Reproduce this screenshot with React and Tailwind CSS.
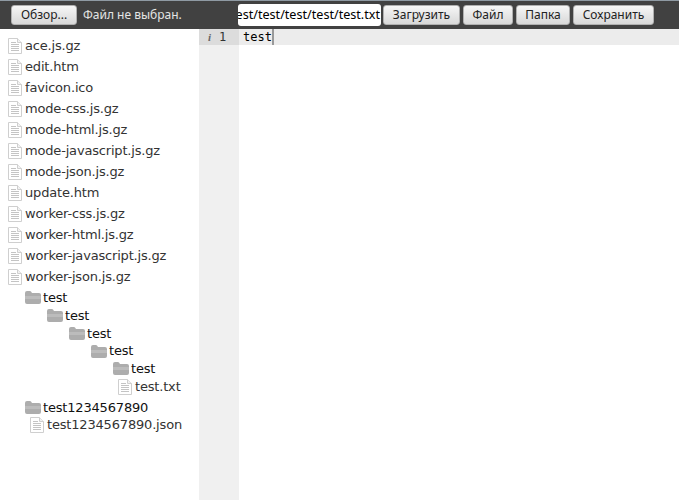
const FILES = [
  'ace.js.gz',
  'edit.htm',
  'favicon.ico',
  'mode-css.js.gz',
  'mode-html.js.gz',
  'mode-javascript.js.gz',
  'mode-json.js.gz',
  'update.htm',
  'worker-css.js.gz',
  'worker-html.js.gz',
  'worker-javascript.js.gz',
  'worker-json.js.gz',
];

const TOOLS = [
  { label: 'Загрузить', width: 'w-[77px]' },
  { label: 'Файл', width: 'w-[50px]' },
  { label: 'Папка', width: 'w-[54px]' },
  { label: 'Сохранить', width: 'w-[81px]' },
];

function FileIcon() {
  return (
    <svg width="14" height="16" viewBox="0 0 14 16" className="shrink-0">
      <path d="M0.5 0.5H9.5L13.5 4.5V15.5H0.5Z" fill="#fff" stroke="#cfcfcf" />
      <path d="M9.5 0.5V4.5H13.5" fill="#f2f2f2" stroke="#cfcfcf" />
      <path d="M3 4.5H8M3 6.5H11M3 8.5H11M3 10.5H11M3 12.5H11" stroke="#c4c4c4" />
    </svg>
  );
}

function FolderIcon() {
  return (
    <svg width="16" height="13" viewBox="0 0 16 13" className="shrink-0">
      <path d="M0 2Q0 0 2 0H5Q6 0 7 2H14Q16 2 16 4V11Q16 13 14 13H2Q0 13 0 11Z" fill="#adadad" />
      <path d="M0 5H16V8H0Z" fill="#bcbcbc" />
    </svg>
  );
}

function File({ name, className = '' }) {
  return (
    <div className={`flex h-[21px] items-center gap-[3px] ${className}`}>
      <FileIcon />
      <span>{name}</span>
    </div>
  );
}

function Folder({ name, children }) {
  return (
    <div className="ml-[22px]">
      <div className="flex h-[17.75px] items-center gap-[2px] text-[#111]">
        <FolderIcon />
        <span>{name}</span>
      </div>
      {children}
    </div>
  );
}

function Btn({ children, className = '' }) {
  return (
    <button className={`h-[20px] rounded-[3px] border border-[#b0b0b0] bg-gradient-to-b from-[#f6f6f6] to-[#d8d8d8] text-center font-['Noto_Sans',sans-serif] text-[12px] leading-none text-[#222] ${className}`}>
      {children}
    </button>
  );
}

export default function App() {
  return (
    <div className="flex h-[500px] w-[679px] flex-col overflow-hidden bg-white font-['DejaVu_Sans',sans-serif]">
      <div className="flex h-[29px] shrink-0 items-center border-t border-t-[#8f9aa3] bg-[#414141] pl-[11px]">
        <Btn className="w-[66px]">Обзор...</Btn>
        <span className="ml-[6px] w-[155px] font-['Noto_Sans',sans-serif] text-[12px] text-[#e4e4e4]">Файл не выбран.</span>
        <div className="flex h-[22px] w-[143px] items-center justify-end overflow-hidden rounded-[3px] bg-white pr-px font-['Noto_Sans',sans-serif] text-[12.6px] text-black">
          <span className="whitespace-nowrap">/test/test/test/test/test/test.txt</span>
        </div>
        <div className="ml-[2px] flex gap-[3px]">
          {TOOLS.map((t) => (
            <Btn key={t.label} className={t.width}>{t.label}</Btn>
          ))}
        </div>
      </div>
      <div className="flex min-h-0 flex-1">
        <div className="w-[199px] shrink-0 pl-[8px] pt-[6px] text-[13px] tracking-[-0.18px] text-[#333]">
          {FILES.map((f) => (
            <File key={f} name={f} />
          ))}
          <div className="mt-[2px] ml-[-8px] pl-[3px]">
            <Folder name="test">
              <Folder name="test">
                <Folder name="test">
                  <Folder name="test">
                    <Folder name="test">
                      <File name="test.txt" className="ml-[5px] !h-[17.75px]" />
                    </Folder>
                  </Folder>
                </Folder>
              </Folder>
            </Folder>
            <div className="mt-[3px]">
              <Folder name="test1234567890">
                <File name="test1234567890.json" className="ml-[5px] !h-[17.75px]" />
              </Folder>
            </div>
          </div>
        </div>
        <div className="w-[40px] shrink-0 bg-[#f0f0f0]">
          <div className="flex h-[16px] items-center bg-[#dcdcdc] font-['DejaVu_Sans_Mono',monospace] text-[12px] text-[#333]">
            <span className="ml-[9px] font-['Liberation_Serif',serif] text-[11px] font-bold italic text-[#666]">i</span>
            <span className="ml-[8px]">1</span>
          </div>
        </div>
        <div className="flex-1">
          <div className="flex h-[16px] items-center bg-[#ececec] pl-[4px] font-['DejaVu_Sans_Mono',monospace] text-[12px] text-black">
            <span>test</span>
            <span className="h-[16px] w-[2px] bg-[#999]" />
          </div>
        </div>
      </div>
    </div>
  );
}
